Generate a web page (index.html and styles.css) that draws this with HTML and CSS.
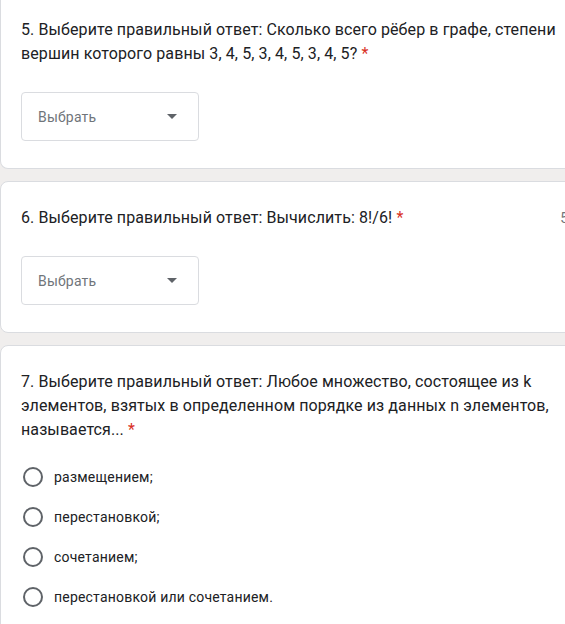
FILE: index.html
```html
<!DOCTYPE html>
<html lang="ru">
<head>
<meta charset="utf-8">
<title>Форма</title>
<link rel="stylesheet" href="styles.css">
</head>
<body>
<div class="page">
  <div class="card card-first">
    <div class="q-head">
      <div class="q-title">5. Выберите правильный ответ: Сколько всего рёбер в графе, степени вершин которого равны 3, 4, 5, 3, 4, 5, 3, 4, 5? <span class="req">*</span></div>
    </div>
    <div class="select">
      <span class="select-text">Выбрать</span>
      <span class="select-arrow"></span>
    </div>
  </div>

  <div class="card">
    <div class="q-head">
      <div class="q-title">6. Выберите правильный ответ: Вычислить: 8!/6! <span class="req">*</span></div>
      <div class="q-points">5 баллов</div>
    </div>
    <div class="select">
      <span class="select-text">Выбрать</span>
      <span class="select-arrow"></span>
    </div>
  </div>

  <div class="card card-last">
    <div class="q-head">
      <div class="q-title">7. Выберите правильный ответ: Любое множество, состоящее из k элементов, взятых в определенном порядке из данных n элементов, называется... <span class="req">*</span></div>
    </div>
    <div class="options">
      <div class="option"><span class="radio"></span><span class="opt-label">размещением;</span></div>
      <div class="option"><span class="radio"></span><span class="opt-label">перестановкой;</span></div>
      <div class="option"><span class="radio"></span><span class="opt-label">сочетанием;</span></div>
      <div class="option"><span class="radio"></span><span class="opt-label">перестановкой или сочетанием.</span></div>
    </div>
  </div>
</div>
</body>
</html>
```

FILE: styles.css
```css
html, body {
  margin: 0;
  padding: 0;
}
body {
  background: #f0eeed;
  overflow: hidden;
  font-family: Roboto, "Liberation Sans", Arial, sans-serif;
  color: #202124;
  width: 565px;
  height: 624px;
}
.page {
  width: 660px;
  display: flex;
  flex-direction: column;
  gap: 12px;
}
.card {
  background: #fff;
  border: 1px solid #dadce0;
  border-radius: 8px;
  padding: 24px 24px 27px 20px;
}
.card-first {
  border-top: none;
  border-top-left-radius: 0;
  border-top-right-radius: 0;
  padding-top: 18px;
}
.card-last {
  padding-bottom: 40px;
}
.q-head {
  display: flex;
  justify-content: space-between;
  align-items: flex-start;
}
.q-title {
  width: 540px;
  font-size: 16px;
  line-height: 24px;
  letter-spacing: 0.1px;
  color: #202124;
}
.req {
  color: #d93025;
}
.q-points {
  font-size: 14px;
  line-height: 24px;
  color: #70757a;
  white-space: nowrap;
  width: 75px;
}
.select {
  margin-top: 26px;
  height: 47px;
  border: 1px solid #dadce0;
  border-radius: 4px;
  display: flex;
  align-items: center;
  justify-content: space-between;
  padding: 0 21px 0 16px;
  box-sizing: content-box;
  width: 139px;
}
.select-text {
  font-size: 14px;
  color: #70757a;
  letter-spacing: 0.2px;
}
.select-arrow {
  width: 0;
  height: 0;
  border-left: 5px solid transparent;
  border-right: 5px solid transparent;
  border-top: 5px solid #5f6368;
}
.options {
  margin-top: 15px;
  display: flex;
  flex-direction: column;
}
.option {
  height: 40px;
  display: flex;
  align-items: center;
  gap: 11px;
  padding-left: 2px;
}
.radio {
  width: 16px;
  height: 16px;
  border: 2px solid #5f6368;
  border-radius: 50%;
  flex: none;
}
.opt-label {
  font-size: 14px;
  letter-spacing: 0.2px;
  color: #202124;
}
```
